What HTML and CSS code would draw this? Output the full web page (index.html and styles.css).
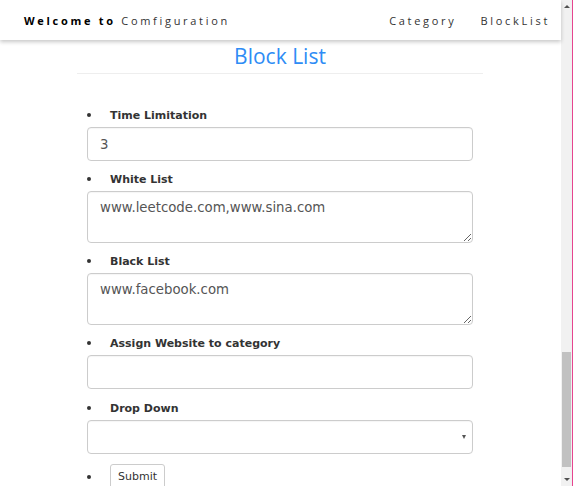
FILE: index.html
```html
<!DOCTYPE html>
<html>
<head>
<meta charset="utf-8">
<link rel="stylesheet" href="styles.css">
</head>
<body>
<div class="page">
  <nav class="nav">
    <div class="brand"><b>Welcome to</b> Comfiguration</div>
    <div class="links"><span>Category</span><span>BlockList</span></div>
  </nav>
  <div class="container">
    <h2 class="title">Block List</h2>
    <form class="form">
      <div class="group">
        <label class="label">Time Limitation</label>
        <input class="control" type="text" value="3">
      </div>
      <div class="group">
        <label class="label">White List</label>
        <textarea class="control area">www.leetcode.com,www.sina.com</textarea>
      </div>
      <div class="group">
        <label class="label">Black List</label>
        <textarea class="control area">www.facebook.com</textarea>
      </div>
      <div class="group">
        <label class="label">Assign Website to category</label>
        <input class="control" type="text" value="">
      </div>
      <div class="group group-drop">
        <label class="label">Drop Down</label>
        <div class="select-wrap">
          <select class="control select"><option></option></select>
          <span class="caret"></span>
        </div>
      </div>
      <div class="submit-row">
        <button class="btn" type="button">Submit</button>
      </div>
    </form>
  </div>
</div>
<div class="scrollbar">
  <div class="arrow up"></div>
  <div class="track"><div class="thumb"></div></div>
  <div class="arrow down"></div>
</div>
<div class="edge"></div>
</body>
</html>
```
FILE: styles.css
```css
html, body { margin: 0; padding: 0; }
body {
  display: flex;
  width: 573px;
  height: 486px;
  overflow: hidden;
  background: #fff;
  font-family: "DejaVu Sans", Verdana, sans-serif;
  color: #333;
}
.page {
  width: 561px;
  flex: none;
  display: flex;
  flex-direction: column;
}
.nav {
  height: 40px;
  flex: none;
  display: flex;
  align-items: center;
  justify-content: space-between;
  padding: 0 11px 0 24px;
  box-shadow: 0 2px 4px rgba(0,0,0,0.22);
  font-family: "Open Sans", sans-serif;
  font-size: 11px;
  letter-spacing: 2.7px;
  color: #333;
  position: relative;
  z-index: 1;
}
.brand b { color: #000; font-weight: 700; }
.links { display: flex; gap: 24px; }
.container {
  width: 406px;
  margin: 0 0 0 77px;
}
.title {
  margin: 0;
  height: 34px;
  line-height: 30px;
  padding-top: 1px;
  box-sizing: border-box;
  text-align: center;
  font-family: "Open Sans", sans-serif;
  font-weight: 400;
  font-size: 21px;
  color: #2e8cf5;
  border-bottom: 1px solid #eee;
}
.form {
  padding: 32px 10px 0;
  display: flex;
  flex-direction: column;
  gap: 9px;
}
.group { display: flex; flex-direction: column; }
.group-drop { margin-top: 1px; }
.label {
  display: flex;
  align-items: center;
  height: 18px;
  margin-bottom: 3px;
  font-size: 11px;
  font-weight: 700;
  color: #333;
}
.label::before, .submit-row::before {
  content: "";
  width: 4px;
  height: 4px;
  border-radius: 50%;
  background: #333;
  margin-left: 0;
  margin-right: 19px;
  flex: none;
}
.control {
  box-sizing: border-box;
  width: 386px;
  height: 34px;
  margin: 0;
  padding: 6px 12px;
  border: 1px solid #ccc;
  border-radius: 4px;
  font-family: "DejaVu Sans", Verdana, sans-serif;
  font-size: 13.3px;
  color: #555;
  background: #fff;
  box-shadow: inset 0 1px 1px rgba(0,0,0,0.04);
  outline: none;
}
.area {
  height: 52px;
  line-height: 20px;
  padding-top: 6px;
  resize: vertical;
  overflow: hidden;
}
.select-wrap { position: relative; }
.select { appearance: none; -webkit-appearance: none; }
.caret {
  position: absolute;
  right: 7px;
  top: 15px;
  width: 0;
  height: 0;
  border-left: 2.5px solid transparent;
  border-right: 2.5px solid transparent;
  border-top: 4px solid #555;
}
.submit-row {
  display: flex;
  align-items: center;
  margin-top: 1px;
}
.btn {
  height: 25px;
  padding: 0 7px;
  border: 1px solid #ccc;
  border-radius: 3px;
  background: #fff;
  font-family: "DejaVu Sans", Verdana, sans-serif;
  font-size: 11px;
  color: #333;
}
.scrollbar {
  width: 11px;
  flex: none;
  background: #f1f1f1;
  display: flex;
  flex-direction: column;
}
.track { flex: 1; display: flex; flex-direction: column; justify-content: flex-end; padding-bottom: 6px; }
.thumb { height: 115px; background: #c1c1c1; margin: 0 1px; }
.arrow { height: 13px; display: flex; align-items: center; justify-content: center; }
.arrow.up::after {
  content: ""; border-left: 3px solid transparent; border-right: 3px solid transparent;
  border-bottom: 3px solid #505050;
}
.arrow.down::after {
  content: ""; border-left: 3px solid transparent; border-right: 3px solid transparent;
  border-top: 3px solid #505050;
}
.edge { width: 1px; flex: none; background: #e6458f; }
```
